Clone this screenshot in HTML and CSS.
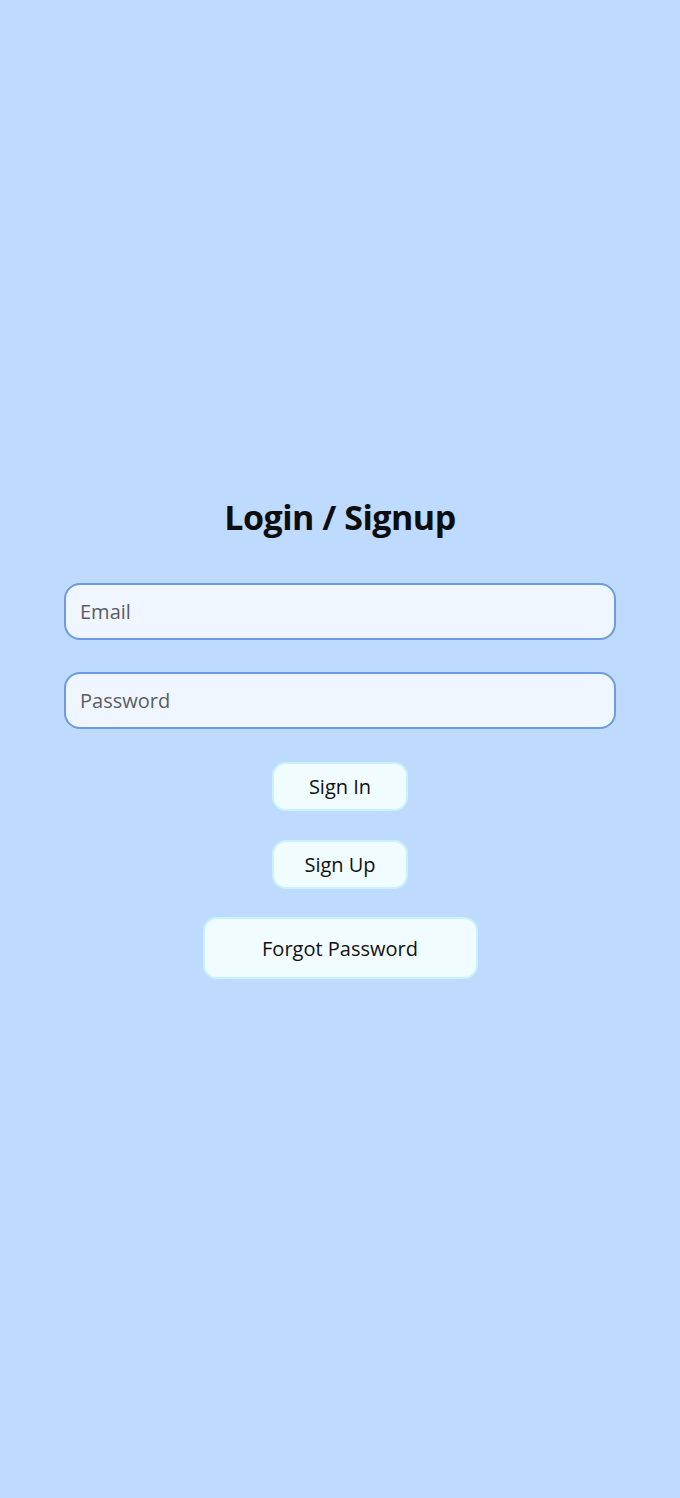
FILE: index.html
```html
<!DOCTYPE html>
<html lang="en">
<head>
<meta charset="utf-8">
<title>Login / Signup</title>
<link rel="stylesheet" href="styles.css">
</head>
<body>
<main class="page">
  <h1 class="title">Login / Signup</h1>
  <form class="form">
    <input class="field" type="email" placeholder="Email">
    <input class="field" type="password" placeholder="Password">
    <div class="actions">
      <button type="button" class="btn btn-small">Sign In</button>
      <button type="button" class="btn btn-small">Sign Up</button>
      <button type="button" class="btn btn-wide">Forgot Password</button>
    </div>
  </form>
</main>
</body>
</html>
```

FILE: styles.css
```css
* { box-sizing: border-box; }
html, body {
  margin: 0;
  padding: 0;
  background: #bedaff;
}
body {
  font-family: "Open Sans", "Noto Sans", sans-serif;
  color: #111;
}
.page {
  min-height: 100vh;
  display: flex;
  flex-direction: column;
  align-items: center;
  padding-top: 492px;
}
.title {
  margin: 0;
  font-size: 34px;
  line-height: 50px;
  font-weight: 700;
  letter-spacing: -0.5px;
  color: #0d0d0d;
}
.form {
  margin-top: 41px;
  width: 552px;
  display: flex;
  flex-direction: column;
  gap: 32px;
}
.field {
  display: block;
  width: 100%;
  height: 57px;
  border: 2px solid #6d9ae0;
  border-radius: 16px;
  background: #eff6ff;
  padding: 0 14px;
  font-family: inherit;
  font-size: 20px;
  color: #333;
  outline: none;
}
.field::placeholder {
  color: #5a5d63;
}
.actions {
  display: flex;
  flex-direction: column;
  align-items: center;
  gap: 29px;
  margin-top: 1px;
}
.btn {
  font-family: inherit;
  font-size: 20px;
  color: #111;
  background: #f0fcff;
  border: 2px solid #c8f3fb;
  border-radius: 14px;
  cursor: pointer;
}
.btn-small {
  width: 136px;
  height: 49px;
}
.btn-wide {
  width: 275px;
  height: 62px;
  margin-top: -1px;
}
```
